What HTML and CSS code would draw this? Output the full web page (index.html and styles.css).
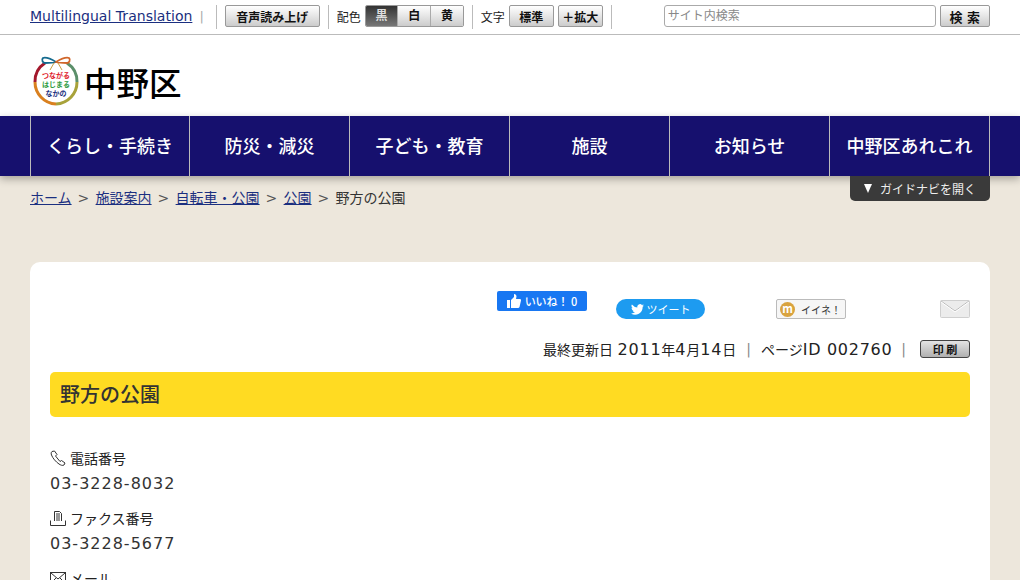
FILE: index.html
```html
<!DOCTYPE html>
<html lang="ja">
<head>
<meta charset="utf-8">
<title>野方の公園 | 中野区</title>
<link rel="stylesheet" href="styles.css">
</head>
<body>
<header class="topbar">
  <div class="topbar-in">
    <a class="lang" href="#">Multilingual Translation</a><span class="pipe">|</span>
    <span class="vline vline-a"></span>
    <button class="btn btn-voice">音声読み上げ</button>
    <span class="vline vline-b"></span>
    <span class="lbl">配色</span>
    <div class="seg"><span class="seg-i seg-on">黒</span><span class="seg-i">白</span><span class="seg-i">黄</span></div>
    <span class="vline vline-b"></span>
    <span class="lbl">文字</span>
    <button class="btn btn-std">標準</button>
    <button class="btn btn-big">＋拡大</button>
    <span class="vline vline-c"></span>
    <div class="search"><input class="search-in" placeholder="サイト内検索"><button class="btn btn-search">検 索</button></div>
  </div>
</header>
<div class="brand">
  <svg class="logo" width="50" height="52" viewBox="0 0 50 52">
    <circle cx="25" cy="27" r="21" fill="#fff"/>
    <path d="M14 8A22 22 0 0 0 4 27" fill="none" stroke="#a3182c" stroke-width="3"/>
    <path d="M36 8A22 22 0 0 1 46 27" fill="none" stroke="#5b8f6a" stroke-width="3"/>
    <path d="M4 27A22 22 0 0 0 25 49" fill="none" stroke="#d9801f" stroke-width="3"/>
    <path d="M25 49A22 22 0 0 0 46 27" fill="none" stroke="#a8a23a" stroke-width="3"/>
    <path d="M25 7C20 4 15 2 12 3 10 5 12 8 14 8 18 8 22 8 25 7Z" fill="#fff" stroke="#146a8e" stroke-width="1.800"/>
    <path d="M25 7C30 4 35 2 38 3 40 5 38 8 36 8 32 8 28 8 25 7Z" fill="#fff" stroke="#d0662a" stroke-width="1.800"/>
    <path d="M23 8 19 15M27 8 31 15" fill="none" stroke="#c9a040" stroke-width="1"/>
    <text class="logo-t" x="25" y="23" fill="#e0202c">つながる</text>
    <text class="logo-t" x="25" y="32" fill="#2a9a3c">はじまる</text>
    <text class="logo-t" x="25" y="41" fill="#1c2f80">なかの</text>
  </svg>
  <span class="wordmark">中野区</span>
</div>
<nav class="gnav">
  <div class="gnav-in">
    <a class="gnav-i" href="#">くらし・手続き</a>
    <a class="gnav-i" href="#">防災・減災</a>
    <a class="gnav-i" href="#">子ども・教育</a>
    <a class="gnav-i" href="#">施設</a>
    <a class="gnav-i" href="#">お知らせ</a>
    <a class="gnav-i" href="#">中野区あれこれ</a>
  </div>
</nav>
<main class="main">
  <a class="guide" href="#"><span class="guide-tri"></span>ガイドナビを開く</a>
  <div class="crumbs">
    <a href="#">ホーム</a><span class="sep">&gt;</span><a href="#">施設案内</a><span class="sep">&gt;</span><a href="#">自転車・公園</a><span class="sep">&gt;</span><a href="#">公園</a><span class="sep">&gt;</span><span>野方の公園</span>
  </div>
  <article class="card">
    <div class="social">
      <span class="fb"><svg width="14" height="14" viewBox="0 0 14 14"><path fill="#fff" d="M0 6h3v8H0zM4 6l3-3V0c1.500 0 2.500 1 2.500 2.500L9 5h4c1 0 1 1 1 1.500L12.500 13c-.2.700-.7 1-1.500 1H4z"/></svg>いいね！ 0</span>
      <span class="tw"><svg width="13" height="11" viewBox="0 0 24 20"><path fill="#fff" d="M24 2.400a10 10 0 0 1-2.800.8A5 5 0 0 0 23.300.500a10 10 0 0 1-3.100 1.200 4.900 4.900 0 0 0-8.400 4.500A14 14 0 0 1 1.700.900a4.900 4.900 0 0 0 1.500 6.600 5 5 0 0 1-2.200-.6 4.900 4.900 0 0 0 3.900 4.900 5 5 0 0 1-2.200.1 4.900 4.900 0 0 0 4.600 3.400A10 10 0 0 1 0 17.300 14 14 0 0 0 21.500 5a10 10 0 0 0 2.500-2.600z"/></svg>ツイート</span>
      <span class="mx"><span class="mx-m">m</span>イイネ！</span>
      <svg class="mail" width="30" height="18" viewBox="0 0 30 18"><rect x=".5" y=".5" width="29" height="17" rx="1" fill="#ececec" stroke="#cfcfcf"/><path d="M1 1l14 10L29 1" fill="none" stroke="#bbb"/><path d="M1 2l14 10L29 2" fill="none" stroke="#fff"/></svg>
    </div>
    <div class="meta">
      <span>最終更新日 <span class="num">2011</span>年<span class="num">4</span>月<span class="num">14</span>日</span><span class="pipe pipe-wide">|</span><span>ページ<span class="num num-id">ID 002760</span></span><span class="pipe">|</span><button class="print">印 刷</button>
    </div>
    <h1 class="title">野方の公園</h1>
    <dl class="contact">
      <dt><svg width="16" height="16" viewBox="0 0 16 16"><path d="M2 1.500 4.500 1 7 4.500 5.500 6 10 11.500l1.500-1 3.500 2.500-1 2c-1.500 1-3.500 0-5-1C6 12 2.500 8 1.500 5 1 3.500 1 2.500 2 1.500z" fill="none" stroke="#333"/></svg>電話番号</dt>
      <dd>03-3228-8032</dd>
      <dt><svg width="16" height="16" viewBox="0 0 16 16"><path d="M4.500 11V1.500h5l2 2V11M6 4h4M6 6h4M6 8h4M6 10h4M.5 10.500v5h15v-5" fill="none" stroke="#333"/></svg>ファクス番号</dt>
      <dd>03-3228-5677</dd>
      <dt><svg width="16" height="12" viewBox="0 0 16 12"><rect x=".5" y=".5" width="15" height="11" fill="none" stroke="#333"/><path d="M1 1l7 6 7-6M1 11l5-5M15 11l-5-5" fill="none" stroke="#333"/></svg>メール</dt>
    </dl>
  </article>
</main>
</body>
</html>
```
FILE: styles.css
```css
* { box-sizing: border-box; }
html, body { margin: 0; height: 580px; overflow: hidden; }
body { font-family: "DejaVu Sans", "Noto Sans CJK JP", sans-serif; font-size: 14px; color: #333; background: #ede7dc; }
a { color: #1b2f80; }
.topbar { height: 35px; background: #fff; border-bottom: 1px solid #bbb; }
.topbar-in { display: flex; align-items: center; height: 34px; padding: 0 0 2px 30px; }
.lang { font-size: 14.060px; }
.pipe { color: #aaa; font-size: 13px; }
.topbar .pipe { margin-left: 7px; }
.vline { width: 1px; height: 24px; margin-top: 2px; background: #bbb; flex: none; }
.vline-a { margin-left: 12px; margin-right: 8px; }
.vline-b { margin-left: 8px; margin-right: 8px; }
.vline-c { margin-left: 8px; }
.btn { font-family: inherit; border: 1px solid #999; border-radius: 2px; background: linear-gradient(#fff, #ccc); color: #111; padding: 0; height: 22px; font-size: 12px; font-weight: bold; }
.btn-voice { width: 95px; }
.lbl { font-size: 12px; color: #222; margin-right: 4px; }
.seg { display: flex; width: 99px; border: 1px solid #999; border-radius: 2px; height: 22px; overflow: hidden; }
.seg-i { flex: 1; font-size: 12px; font-weight: bold; line-height: 20px; text-align: center; color: #111; background: linear-gradient(#fff, #ccc); border-left: 1px solid #aaa; }
.seg-i:first-child { border-left: 0; }
.seg-on { color: #ddd; background: linear-gradient(#333, #777); }
.btn-std { width: 45px; }
.btn-big { width: 45px; margin-left: 4px; }
.search { display: flex; align-items: center; gap: 4px; margin-left: 52px; }
.search-in { width: 272px; height: 22px; border: 1px solid #aaa; border-radius: 3px; padding: 0 3px; font-family: inherit; font-size: 12px; background: #fff; }
.search-in::placeholder { color: #888; opacity: 1; }
.btn-search { width: 50px; font-size: 13px; }
.brand { height: 81px; background: #fff; display: flex; align-items: flex-start; padding: 20px 0 0 31px; gap: 3px; }
.logo { flex: none; }
.logo-t { font-size: 7px; font-weight: bold; text-anchor: middle; font-family: "Noto Sans CJK JP", sans-serif; }
.wordmark { font-size: 32.500px; line-height: 54px; color: #000; font-weight: 500; font-family: "Noto Sans CJK JP", sans-serif; }
.gnav { height: 60px; background: #16106e; box-shadow: 0 3px 8px rgba(0,0,0,.3); position: relative; }
.gnav-in { display: flex; height: 60px; margin: 0 30px; }
.gnav-i { width: 160px; padding-bottom: 2px; display: flex; align-items: center; justify-content: center; color: #fff; text-decoration: none; font-size: 18px; font-weight: 500; font-family: "Noto Sans CJK JP", sans-serif; border-right: 1px solid #bbb; }
.gnav-i:first-child { border-left: 1px solid #bbb; }
.main { position: relative; padding: 0 30px; }
.guide { position: absolute; right: 30px; top: 0; width: 140px; height: 25px; background: #3a3a3a; border-radius: 0 0 5px 5px; color: #eee; font-size: 12px; text-decoration: none; display: flex; align-items: center; justify-content: center; gap: 8px; font-family: "Noto Sans CJK JP", sans-serif; z-index: 2; }
.guide-tri { width: 8px; height: 9px; background: #fff; clip-path: polygon(0 0, 100% 0, 50% 100%); }
.crumbs { height: 86px; padding-top: 11px; font-size: 14px; line-height: 20px; font-family: "Noto Sans CJK JP", sans-serif; }
.sep { display: inline-block; width: 12px; margin: 0 6px; font-family: "DejaVu Sans", sans-serif; color: #555; }
.card { background: #fff; border-radius: 10px 10px 0 0; height: 330px; padding: 29px 20px 0; }
.social { position: relative; height: 37px; }
.fb { position: absolute; left: 447px; top: 0; width: 90px; height: 20px; background: #1877f2; border-radius: 2px; color: #fff; font-size: 11px; font-weight: 500; display: flex; align-items: center; justify-content: center; gap: 4px; font-family: "Noto Sans CJK JP", sans-serif; }
.tw { position: absolute; left: 566px; top: 8px; width: 89px; height: 20px; border-radius: 10px; background: #1d9bf0; color: #fff; font-size: 11px; display: flex; align-items: center; justify-content: center; gap: 3px; font-family: "Noto Sans CJK JP", sans-serif; }
.mx { position: absolute; left: 726px; top: 8px; width: 70px; height: 20px; border: 1px solid #bbb; border-radius: 2px; background: #f6f6f6; font-size: 10px; color: #333; display: flex; align-items: center; gap: 6px; padding-left: 3px; font-family: "Noto Sans CJK JP", sans-serif; }
.mx-m { width: 15px; height: 15px; border-radius: 50%; background: #d9a33f; color: #fff; text-align: center; line-height: 13px; font-size: 11px; font-weight: bold; }
.mail { position: absolute; right: 0; top: 9px; }
.meta { display: flex; justify-content: flex-end; align-items: center; height: 22px; margin-top: 10px; font-size: 14px; color: #222; }
.num { font-size: 16px; letter-spacing: .8px; }
.num-id { letter-spacing: .7px; }
.meta .pipe { margin: 0 9px; font-size: 14px; color: #888; }
.meta .pipe-wide { margin: 0 10px; }
.print { width: 50px; height: 18px; margin-left: 5px; padding: 0; font-family: "Noto Sans CJK JP", sans-serif; font-size: 11px; font-weight: bold; color: #111; border: 1px solid #444; border-radius: 3px; background: linear-gradient(#e4e4e4, #b0b0b0); }
.title { margin: 12px 0 0; height: 45px; background: #ffdb22; border-radius: 5px; padding-left: 10px; font-size: 20px; line-height: 44px; color: #333; font-weight: 500; font-family: "Noto Sans CJK JP", sans-serif; }
.contact { margin: 31px 0 0; }
.contact dt { display: flex; align-items: center; gap: 4px; height: 20px; font-size: 14px; color: #222; font-family: "Noto Sans CJK JP", sans-serif; }
.contact dd { margin: 6px 0 14px; height: 20px; font-size: 16px; line-height: 20px; letter-spacing: 1px; }
```
